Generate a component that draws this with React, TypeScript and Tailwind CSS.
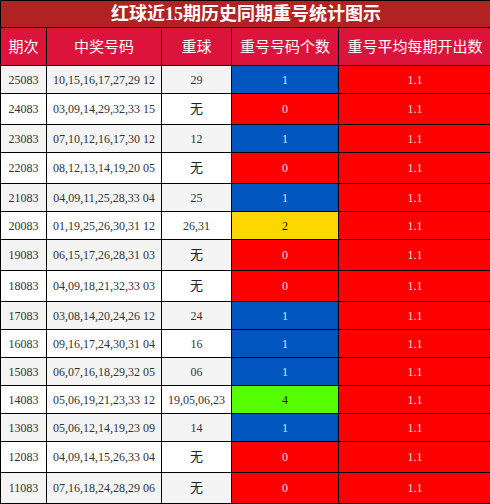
const rows: { issue: string; nums: string; repeat: string; count: number }[] = [
  { issue: "25083", nums: "10,15,16,17,27,29 12", repeat: "29", count: 1 },
  { issue: "24083", nums: "03,09,14,29,32,33 15", repeat: "无", count: 0 },
  { issue: "23083", nums: "07,10,12,16,17,30 12", repeat: "12", count: 1 },
  { issue: "22083", nums: "08,12,13,14,19,20 05", repeat: "无", count: 0 },
  { issue: "21083", nums: "04,09,11,25,28,33 04", repeat: "25", count: 1 },
  { issue: "20083", nums: "01,19,25,26,30,31 12", repeat: "26,31", count: 2 },
  { issue: "19083", nums: "06,15,17,26,28,31 03", repeat: "无", count: 0 },
  { issue: "18083", nums: "04,09,18,21,32,33 03", repeat: "无", count: 0 },
  { issue: "17083", nums: "03,08,14,20,24,26 12", repeat: "24", count: 1 },
  { issue: "16083", nums: "09,16,17,24,30,31 04", repeat: "16", count: 1 },
  { issue: "15083", nums: "06,07,16,18,29,32 05", repeat: "06", count: 1 },
  { issue: "14083", nums: "05,06,19,21,23,33 12", repeat: "19,05,06,23", count: 4 },
  { issue: "13083", nums: "05,06,12,14,19,23 09", repeat: "14", count: 1 },
  { issue: "12083", nums: "04,09,14,15,26,33 04", repeat: "无", count: 0 },
  { issue: "11083", nums: "07,16,18,24,28,29 06", repeat: "无", count: 0 },
];

function countCell(count: number) {
  if (count === 0) return "bg-[#ff0000] text-[#f2dede]";
  if (count === 1) return "bg-[#0055bf] text-[#dfe6f5]";
  if (count === 2) return "bg-[#ffd700] text-[#111]";
  return "bg-[#55ff00] text-[#111]";
}

export default function App() {
  return (
    <div className="w-[490px] h-[504px] overflow-hidden bg-white">
      <table className="w-[491px] table-fixed border-collapse font-['Liberation_Serif','Noto_Sans_CJK_SC',serif] text-[12px] text-[#333]">
        <colgroup>
          <col className="w-[46px]" />
          <col className="w-[115px]" />
          <col className="w-[70px]" />
          <col className="w-[107px]" />
          <col className="w-[153px]" />
        </colgroup>
        <thead>
          <tr>
            <th
              colSpan={5}
              className="h-[27px] border border-black bg-[#b22222] p-0 text-center text-[18px] font-bold leading-none text-white"
            >
              红球近15期历史同期重号统计图示
            </th>
          </tr>
          <tr className="bg-[#dc143c] font-['Noto_Sans_CJK_SC',sans-serif] text-[15px] text-white">
            <th className="h-[38px] border border-black p-0 font-normal">期次</th>
            <th className="border border-black p-0 font-normal">中奖号码</th>
            <th className="border border-black p-0 font-normal">重球</th>
            <th className="border border-black p-0 font-normal">重号号码个数</th>
            <th className="border border-black p-0 font-normal">重号平均每期开出数</th>
          </tr>
        </thead>
        <tbody>
          {rows.map((r, i) => {
            const none = r.repeat === "无";
            const bg = i % 2 === 0 ? "bg-[#f4f4f4]" : "bg-white";
            return (
              <tr key={r.issue} className={none ? "h-[31px]" : "h-[28px]"}>
                <td className={`border border-black p-0 text-center ${bg}`}>{r.issue}</td>
                <td className={`border border-black p-0 text-center ${bg}`}>{r.nums}</td>
                <td className={`border border-black p-0 text-center ${bg}`}>
                  {none ? (
                    <span className="font-['Noto_Sans_CJK_SC',sans-serif] text-[13px] leading-none text-[#222]">无</span>
                  ) : (
                    r.repeat
                  )}
                </td>
                <td className={`border border-black p-0 text-center ${countCell(r.count)}`}>{r.count}</td>
                <td className="border border-black bg-[#ff0000] p-0 text-center text-[#f2dede]">1.1</td>
              </tr>
            );
          })}
        </tbody>
      </table>
    </div>
  );
}
